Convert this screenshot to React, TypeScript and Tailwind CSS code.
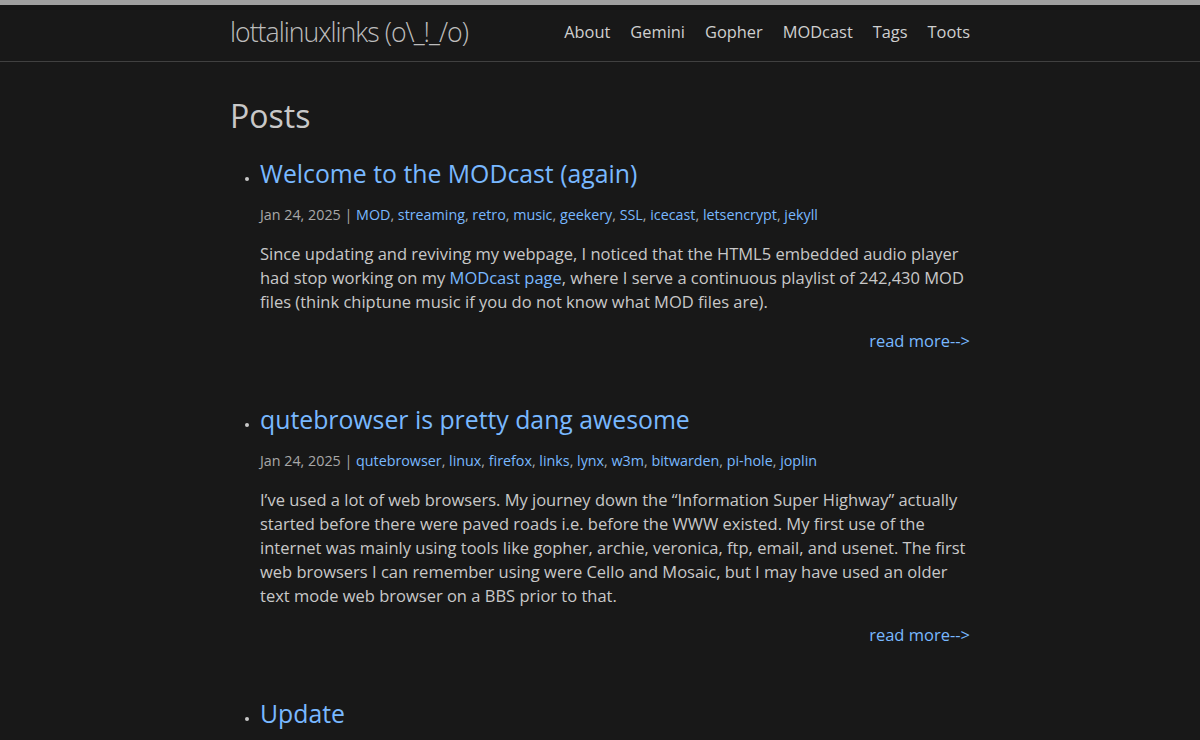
import React from 'react';

type Post = {
  title: string;
  date: string;
  tags: string[];
  body: React.ReactNode;
};

const navLinks = ['About', 'Gemini', 'Gopher', 'MODcast', 'Tags', 'Toots'];

const posts: Post[] = [
  {
    title: 'Welcome to the MODcast (again)',
    date: 'Jan 24, 2025',
    tags: ['MOD', 'streaming', 'retro', 'music', 'geekery', 'SSL', 'icecast', 'letsencrypt', 'jekyll'],
    body: (
      <>
        Since updating and reviving my webpage, I noticed that the HTML5 embedded audio player had stop working on my{' '}
        <a href="#" className="text-[#79b8ff]">MODcast page</a>, where I serve a continuous playlist of 242,430 MOD
        files (think chiptune music if you do not know what MOD files are).
      </>
    ),
  },
  {
    title: 'qutebrowser is pretty dang awesome',
    date: 'Jan 24, 2025',
    tags: ['qutebrowser', 'linux', 'firefox', 'links', 'lynx', 'w3m', 'bitwarden', 'pi-hole', 'joplin'],
    body: (
      <>
        I’ve used a lot of web browsers. My journey down the “Information Super Highway” actually started before there
        were paved roads i.e. before the WWW existed. My first use of the internet was mainly using tools like gopher,
        archie, veronica, ftp, email, and usenet. The first web browsers I can remember using were Cello and Mosaic, but
        I may have used an older text mode web browser on a BBS prior to that.
      </>
    ),
  },
  {
    title: 'Update',
    date: 'Jan 23, 2025',
    tags: [],
    body: null,
  },
];

const App: React.FC = () => {
  return (
    <div
      className="min-h-screen bg-[#181818] text-[#c8c8c8] border-t-[5px] border-[#a0a0a0]"
      style={{ fontFamily: '"Open Sans", "Noto Sans", sans-serif' }}
    >
      {/* Header */}
      <header className="h-[57px] border-b border-[#404040]">
        <div className="w-[740px] mx-auto flex items-center justify-between h-[54px]">
          <a href="#" className="text-[26.7px] font-light tracking-[-1px] text-[#bdbdbd] leading-[54px]">
            lottalinuxlinks (o\_!_/o)
          </a>
          <nav className="flex gap-[20px] text-[16.4px] text-[#cfcfcf]">
            {navLinks.map(link => (
              <a key={link} href="#">{link}</a>
            ))}
          </nav>
        </div>
      </header>

      {/* Posts */}
      <main className="w-[740px] mx-auto pt-[31px]">
        <h1 className="text-[32px] leading-[46px] text-[#c8c8c8] mb-[16px]">Posts</h1>
        <ul className="ml-[30px] list-disc marker:text-[#c8c8c8] marker:text-[12px]">
          {posts.map(post => (
            <li key={post.title} className="mb-[48px]">
              <h3 className="text-[24.8px] leading-[36px]">
                <a href="#" className="text-[#79b8ff]">{post.title}</a>
              </h3>
              <p className="text-[14.3px] leading-[20px] text-[#a8a8a8] mt-[14px]">
                {post.date} |{' '}
                {post.tags.map((tag, i) => (
                  <React.Fragment key={tag}>
                    <a href="#" className="text-[#79b8ff]">{tag}</a>
                    {i < post.tags.length - 1 ? ', ' : ''}
                  </React.Fragment>
                ))}
              </p>
              {post.body && (
                <>
                  <p className="text-[16.5px] leading-[24px] mt-[17px]">{post.body}</p>
                  <p className="text-right mt-[15px] text-[16.5px] leading-[24px]">
                    <a href="#" className="text-[#79b8ff]">read more--&gt;</a>
                  </p>
                </>
              )}
            </li>
          ))}
        </ul>
      </main>
    </div>
  );
};

export default App;
